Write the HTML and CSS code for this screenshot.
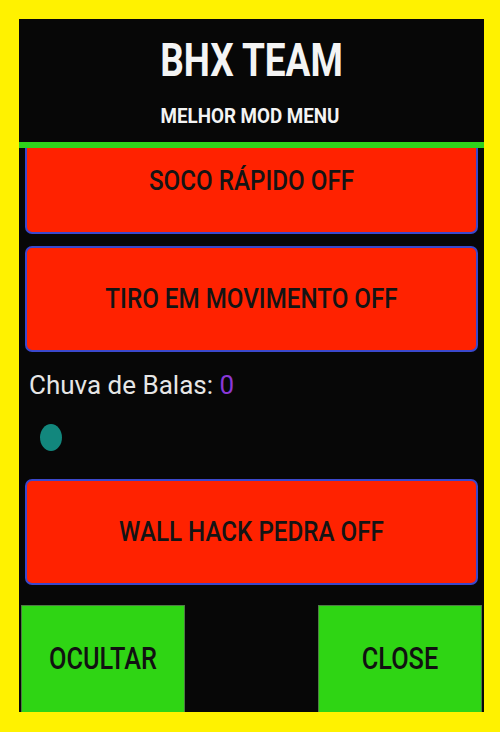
FILE: index.html
```html
<!DOCTYPE html>
<html lang="pt">
<head>
<meta charset="utf-8">
<title>BHX TEAM</title>
<link rel="stylesheet" href="styles.css">
</head>
<body>
<div class="panel">
  <header class="header">
    <h1 class="title"><span class="stretch-lg">BHX TEAM</span></h1>
    <p class="subtitle"><span class="stretch-sm">MELHOR MOD MENU</span></p>
  </header>
  <div class="divider"></div>
  <div class="scroll">
    <div class="list">
      <button class="toggle"><span class="stretch">SOCO RÁPIDO OFF</span></button>
      <button class="toggle toggle-gap"><span class="stretch">TIRO EM MOVIMENTO OFF</span></button>
      <div class="label">Chuva de Balas: <span class="value">0</span></div>
      <div class="slider"><span class="thumb"></span></div>
      <button class="toggle toggle-after-slider"><span class="stretch">WALL HACK PEDRA OFF</span></button>
    </div>
  </div>
  <div class="actions">
    <button class="action"><span class="stretch-lg">OCULTAR</span></button>
    <button class="action"><span class="stretch-lg">CLOSE</span></button>
  </div>
</div>
</body>
</html>
```
FILE: styles.css
```css
html, body {
  margin: 0;
  padding: 0;
}
body {
  background: #fff200;
  width: 500px;
  height: 732px;
  overflow: hidden;
  font-family: Roboto, "Liberation Sans", sans-serif;
}
.panel {
  margin: 19px 16px 0 19px;
  width: 465px;
  height: 693px;
  background: #070707;
  display: flex;
  flex-direction: column;
  overflow: hidden;
}
.header {
  height: 123px;
  flex-shrink: 0;
  box-sizing: border-box;
  padding-top: 20px;
  text-align: center;
  color: #f4f4f4;
}
.title {
  margin: 0;
  font-size: 37px;
  line-height: 44px;
  font-weight: 700;
}
.subtitle {
  margin: 23px 0 0 -3px;
  font-size: 18.8px;
  line-height: 22px;
  font-weight: 700;
}
.stretch-lg, .stretch-sm, .stretch {
  display: inline-block;
}
.stretch-lg { transform: scaleY(1.23); }
.stretch-sm { transform: scaleY(1.06); }
.stretch { transform: scaleY(1.12); }
.divider {
  height: 6px;
  flex-shrink: 0;
  background: #2fd31c;
}
.scroll {
  flex: 1;
  overflow: hidden;
}
.list {
  margin-top: -20px;
  display: flex;
  flex-direction: column;
}
.toggle {
  margin: 0 6px;
  height: 106px;
  box-sizing: border-box;
  border: 2px solid #3b48cc;
  border-radius: 7px;
  background: #ff2200;
  color: #141414;
  font-family: Roboto, "Liberation Sans", sans-serif;
  font-size: 24.2px;
  font-weight: 500;
  display: flex;
  align-items: center;
  justify-content: center;
  padding: 0;
}
.toggle-gap { margin-top: 12px; }
.toggle-after-slider { margin-top: 28px; }
.label {
  margin: 18px 0 0 10px;
  font-size: 26px;
  line-height: 30px;
  color: #e6e6e6;
}
.value { color: #8a38d8; }
.slider {
  margin: 24px 0 0 21px;
  height: 27px;
  display: flex;
  align-items: center;
}
.thumb {
  width: 22px;
  height: 27px;
  border-radius: 50%;
  background: #12877d;
}
.actions {
  height: 107px;
  flex-shrink: 0;
  display: flex;
  justify-content: space-between;
  padding: 0 2px;
}
.action {
  width: 164px;
  height: 112px;
  box-sizing: border-box;
  border: 1px solid #4f7a45;
  background: #2fd514;
  color: #111111;
  font-family: Roboto, "Liberation Sans", sans-serif;
  font-size: 25.3px;
  font-weight: 500;
  padding: 0 0 5px;
  display: flex;
  align-items: center;
  justify-content: center;
}
```
